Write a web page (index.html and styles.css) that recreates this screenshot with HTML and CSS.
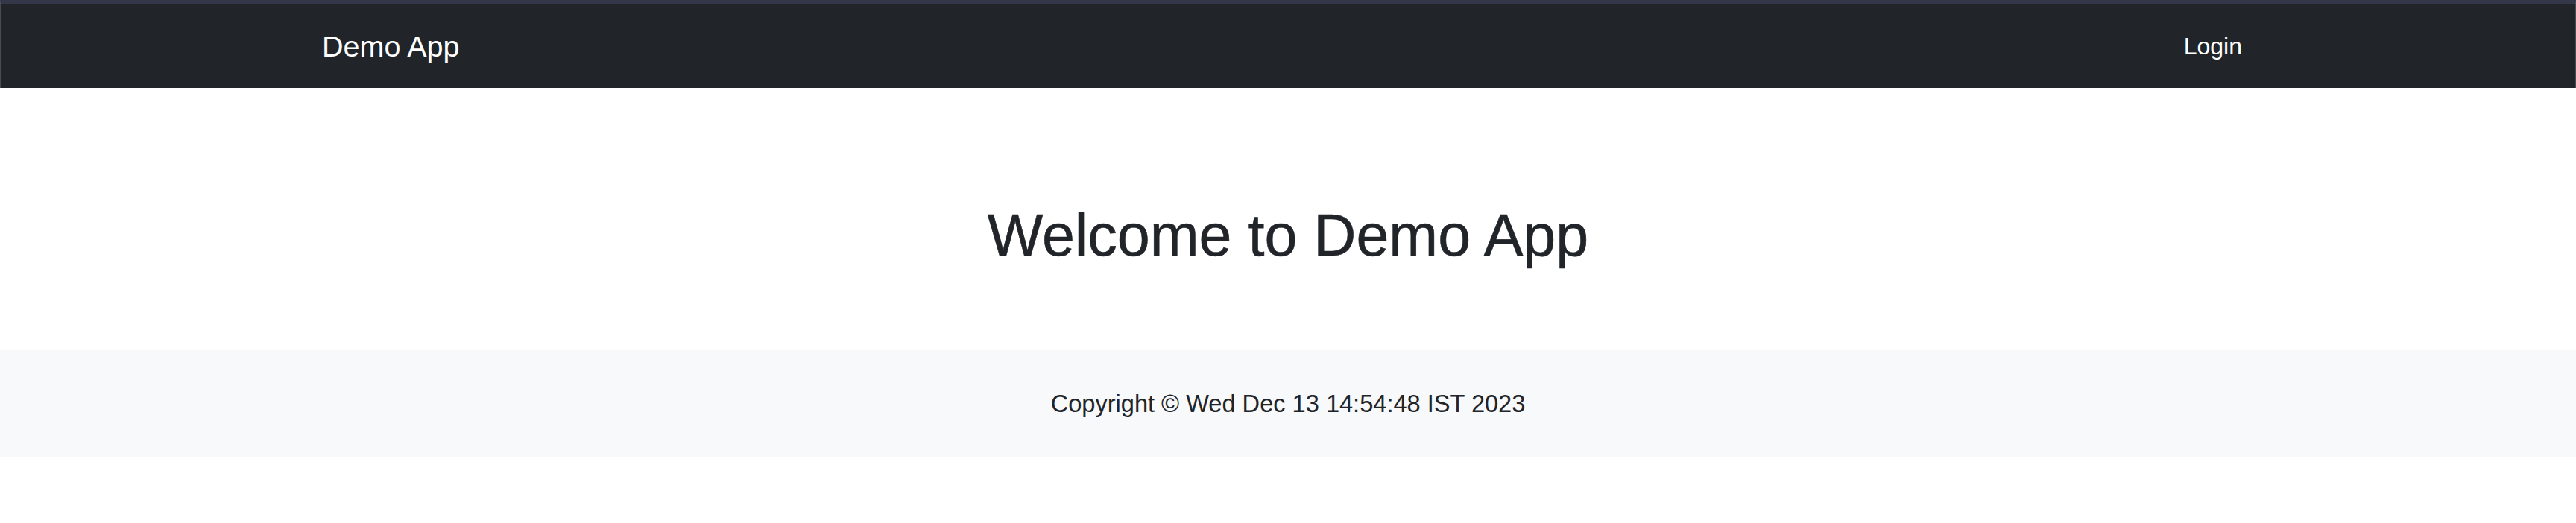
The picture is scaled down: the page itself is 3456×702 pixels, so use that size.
FILE: index.html
```html
<!DOCTYPE html>
<html lang="en">
<head>
<meta charset="utf-8">
<title>Demo App</title>
<link rel="stylesheet" href="styles.css">
</head>
<body>
<nav class="navbar">
  <a class="brand" href="#">Demo App</a>
  <a class="nav-link" href="#">Login</a>
</nav>
<main class="hero">
  <h1 class="title">Welcome to Demo App</h1>
</main>
<footer class="footer">
  <p class="copy">Copyright © Wed Dec 13 14:54:48 IST 2023</p>
</footer>
</body>
</html>
```
FILE: styles.css
```css
html, body {
  margin: 0;
  padding: 0;
  background: #fff;
}
body {
  font-family: "Liberation Sans", Arial, sans-serif;
  color: #212529;
}
.navbar {
  box-sizing: border-box;
  height: 118px;
  background: #212529;
  border-top: 5px solid #34364a;
  border-left: 2px solid #4a4b50;
  border-right: 2px solid #4a4b50;
  display: flex;
  align-items: center;
  justify-content: space-between;
  padding: 0 446px 0 430px;
}
.brand {
  color: #fff;
  text-decoration: none;
  font-size: 39.5px;
  line-height: 60px;
}
.nav-link {
  color: #fff;
  text-decoration: none;
  font-size: 32px;
  line-height: 48px;
}
.hero {
  padding: 150px 0 106px;
  text-align: center;
}
.title {
  margin: 0;
  font-size: 79px;
  font-weight: 400;
  line-height: 96px;
  color: #212529;
  -webkit-text-stroke: 0.6px #212529;
}
.footer {
  background: #f8f9fa;
  height: 143px;
  display: flex;
  align-items: center;
  justify-content: center;
}
.copy {
  margin: 0;
  font-size: 32.6px;
  line-height: 48px;
  color: #212529;
}
```
